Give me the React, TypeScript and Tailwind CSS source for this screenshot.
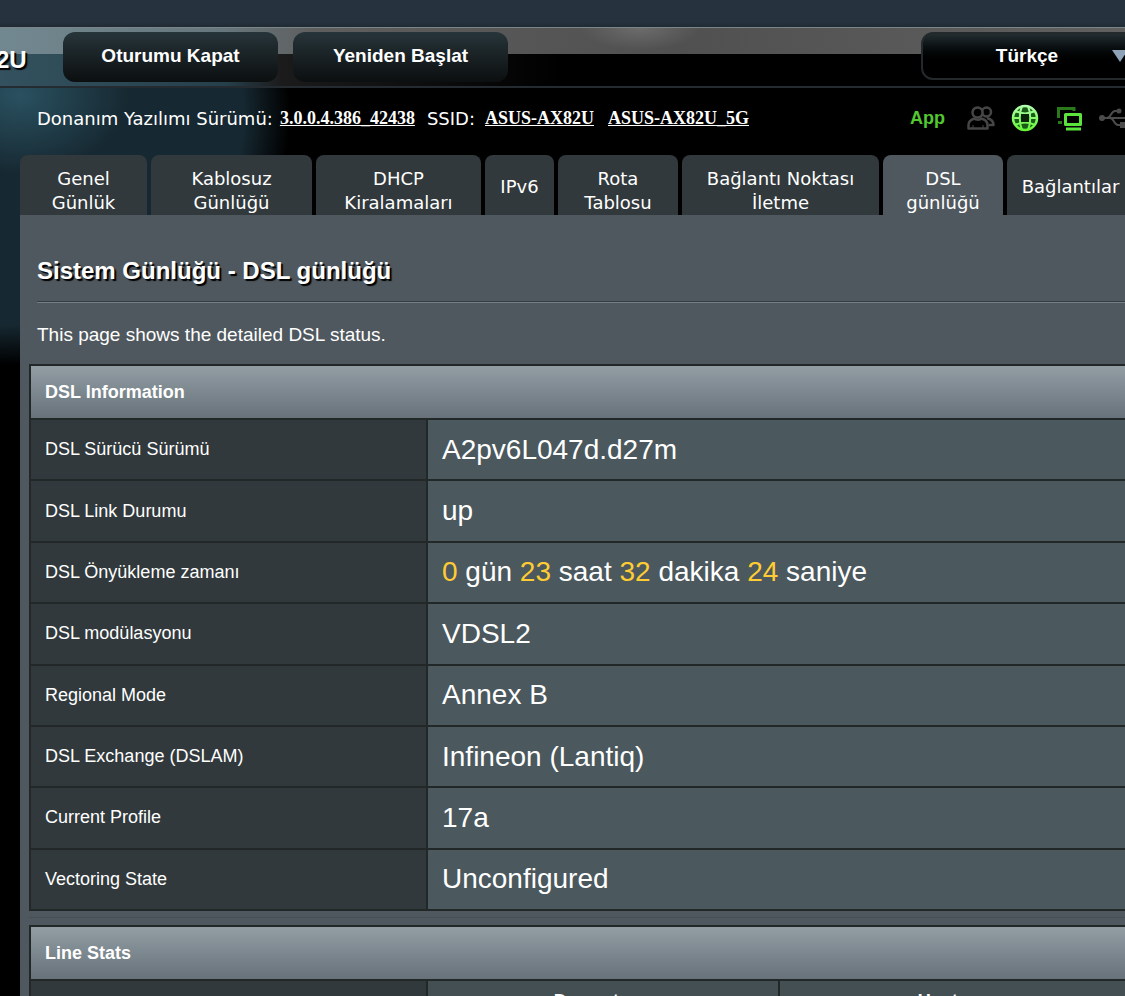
import type { ReactNode } from "react";

const tabs = [
  { lines: ["Genel", "Günlük"], width: "w-[127px]" },
  { lines: ["Kablosuz", "Günlüğü"], width: "w-[161px]" },
  { lines: ["DHCP", "Kiralamaları"], width: "w-[165px]" },
  { lines: ["IPv6"], width: "w-[69px]" },
  { lines: ["Rota", "Tablosu"], width: "w-[120px]" },
  { lines: ["Bağlantı Noktası", "İletme"], width: "w-[197px]" },
  { lines: ["DSL", "günlüğü"], width: "w-[120px]", active: true },
  { lines: ["Bağlantılar"], width: "w-[127px]" },
];

const dslInfo: { label: string; value: ReactNode }[] = [
  { label: "DSL Sürücü Sürümü", value: "A2pv6L047d.d27m" },
  { label: "DSL Link Durumu", value: "up" },
  {
    label: "DSL Önyükleme zamanı",
    value: (
      <>
        <Num>0</Num> gün <Num>23</Num> saat <Num>32</Num> dakika <Num>24</Num> saniye
      </>
    ),
  },
  { label: "DSL modülasyonu", value: "VDSL2" },
  { label: "Regional Mode", value: "Annex B" },
  { label: "DSL Exchange (DSLAM)", value: "Infineon (Lantiq)" },
  { label: "Current Profile", value: "17a" },
  { label: "Vectoring State", value: "Unconfigured" },
];

function Num({ children }: { children: ReactNode }) {
  return <span className="text-[#fc3]">{children}</span>;
}

function TopButton({ children }: { children: ReactNode }) {
  return (
    <button className="h-[50px] w-[215px] shrink-0 rounded-xl bg-gradient-to-b from-[#27353a] to-[#0c0f10] pb-0.5 text-[19px] font-bold text-white">
      {children}
    </button>
  );
}

function TableTitle({ children, span }: { children: ReactNode; span: number }) {
  return (
    <thead>
      <tr>
        <th
          colSpan={span}
          className="h-[54px] border-2 border-[#222728] bg-gradient-to-b from-[#929ea4] to-[#67727a] pl-3.5 text-left text-[18px] font-bold"
        >
          {children}
        </th>
      </tr>
    </thead>
  );
}

function ClientsIcon() {
  return (
    <svg width="28" height="24" viewBox="0 0 28 24" fill="none" stroke="#464646" strokeWidth="2.500" strokeLinejoin="round">
      <circle cx="19.500" cy="6" r="4.500" />
      <path d="M20 12c4 1 6.500 3 6.500 7h-5" />
      <circle cx="10.500" cy="6.500" r="5" fill="#000" />
      <path d="M7.500 12.500C4 13.500 1.500 16 1.500 19v3.500h19V19c0-3-2.500-5.500-6-6.500-1 1.500-6 1.500-7 0z" fill="#000" />
      <path d="M6 22v-3M16 22v-3" strokeWidth="1" />
    </svg>
  );
}

function GlobeIcon() {
  return (
    <svg width="28" height="28" viewBox="0 0 28 28" fill="none" strokeWidth="2">
      <defs>
        <linearGradient id="globe" x1="0" y1="0" x2="0" y2="28" gradientUnits="userSpaceOnUse">
          <stop offset="0" stopColor="#b4ffb4" />
          <stop offset="1" stopColor="#62f52e" />
        </linearGradient>
      </defs>
      <g stroke="url(#globe)">
        <circle cx="14" cy="14" r="12" fill="#1a5a17" strokeWidth="2.500" />
        <path d="M11 2C8 9 8 19 11 26M17 2c3 7 3 17 0 24" />
        <path d="M4 7c6 3 14 3 20 0M4 21c6-3 14-3 20 0" />
        <path d="M2 14h7M19 14h7" />
      </g>
      <path d="M10 10h8v8h-8z" fill="#0b2409" />
    </svg>
  );
}

function ScreensIcon() {
  return (
    <svg width="28" height="28" viewBox="0 0 28 28" fill="none" strokeWidth="3">
      <path d="M3.500 14V4.500H19V7" stroke="#2a7a1c" />
      <path d="M3 17h4v3H3z" fill="#2a7a1c" />
      <path d="M10.500 10.500h15v10h-15z" stroke="#5ae43c" strokeLinejoin="round" />
      <path d="M11 25h15" stroke="#5ae43c" />
    </svg>
  );
}

function UsbIcon() {
  return (
    <svg width="42" height="24" viewBox="0 0 42 24" fill="none" stroke="#4c4c4c" strokeWidth="2">
      <circle cx="3" cy="12" r="2" fill="#4c4c4c" />
      <path d="M3 12h33M8 12c4 0 4-7 8-7h3M11 12c4 0 4 7 8 7h3" />
      <circle cx="20" cy="5" r="1.500" fill="#4c4c4c" />
      <path d="M22 17h4v4h-4zM35 8l6 4-6 4z" fill="#4c4c4c" />
    </svg>
  );
}

export default function App() {
  return (
    <div className="min-h-screen overflow-x-hidden bg-black bg-[radial-gradient(ellipse_110px_80px_at_20px_95px,#2a5160,transparent),radial-gradient(ellipse_290px_250px_at_0px_115px,#162831_84%,transparent)] font-['Liberation_Sans',Arial,sans-serif] text-white">
      <div className="h-[27px] bg-gradient-to-b from-[#26333f] from-80% to-[#202a33]" />

      <header className="bg-[linear-gradient(to_right,#33515e,#26404b_20%,#1c1b1c_25%,transparent_50%)]">
        <div className="flex h-[61px] items-start border-t border-b-2 border-t-[#7b868a] border-b-[#252c31] bg-[radial-gradient(ellipse_60px_22px_at_640px_0px,#6c6c6c,transparent),linear-gradient(to_right,#728890,#66767c_20%,#5e5e5e_28%,#505050_60%,#606060)] bg-[length:100%_26px] bg-no-repeat pt-1">
          <span className="-ml-1 mt-3 w-[67px] shrink-0 text-2xl leading-8 font-bold [text-shadow:2px_2px_1px_#000]">2U</span>
          <div className="flex gap-[15px]">
            <TopButton>Oturumu Kapat</TopButton>
            <TopButton>Yeniden Başlat</TopButton>
          </div>
          <button className="-mr-4 ml-auto flex h-[48px] w-[220px] shrink-0 items-center rounded-xl border-2 border-[#24292b] bg-gradient-to-b from-[#263236] to-black to-70% bg-origin-border pr-2.5 pl-5 text-[19px] font-bold">
            <span className="flex-1">Türkçe</span>
            <svg width="18" height="12" viewBox="0 0 18 12" fill="#8fa3b8">
              <path d="M1 0h16L9 12z" />
            </svg>
          </button>
        </div>
      </header>

      <div className="flex h-[66px] items-center pb-1.5 pl-[37px] font-['DejaVu_Sans',Verdana,sans-serif] text-[18px] whitespace-nowrap">
        <span>Donanım Yazılımı Sürümü:</span>
        <a href="#" className="ml-[7px] font-['Liberation_Serif',serif] font-bold underline">3.0.0.4.386_42438</a>
        <span className="ml-3">SSID:</span>
        <a href="#" className="ml-2.5 font-['Liberation_Serif',serif] font-bold underline">ASUS-AX82U</a>
        <a href="#" className="ml-3.5 font-['Liberation_Serif',serif] font-bold underline">ASUS-AX82U_5G</a>
        <div className="-mr-4 ml-auto flex items-center">
          <a href="#" className="mr-[22px] font-['Liberation_Sans',sans-serif] font-bold text-[#53c72f]">App</a>
          <div className="flex items-center gap-4">
            <ClientsIcon />
            <GlobeIcon />
            <ScreensIcon />
            <UsbIcon />
          </div>
        </div>
      </div>

      <nav className="flex h-[61px] gap-1 pt-px pl-5 font-['DejaVu_Sans',Verdana,sans-serif] text-[18px] leading-6">
        {tabs.map((tab) => (
          <a
            key={tab.lines[0]}
            href="#"
            className={`flex shrink-0 flex-col items-center rounded-t-lg whitespace-nowrap ${tab.width} ${
              tab.active ? "bg-[#4f585e]" : "bg-[#31393c]"
            } ${tab.lines.length > 1 ? "pt-3" : "pt-5"}`}
          >
            {tab.lines.map((line) => (
              <span key={line}>{line}</span>
            ))}
          </a>
        ))}
      </nav>

      <main className="ml-5 bg-[#4f585e] pt-10 pl-[9px]">
        <h1 className="pl-2 text-2xl leading-8 font-bold [text-shadow:2px_2px_1px_#000]">Sistem Günlüğü - DSL günlüğü</h1>
        <hr className="mt-3.5 ml-2 h-0.5 border-t border-b border-t-[#363d40] border-b-[#748088]" />
        <p className="mt-5 pl-2 text-[19px] leading-6">This page shows the detailed DSL status.</p>

        <table className="mt-[17px] h-[547px] w-[calc(100%+6px)] table-fixed border-collapse">
          <colgroup>
            <col className="w-[397px]" />
            <col />
          </colgroup>
          <TableTitle span={2}>DSL Information</TableTitle>
          <tbody>
            {dslInfo.map((row) => (
              <tr key={row.label}>
                <th scope="row" className="border-2 border-[#222728] bg-[#31393c] pl-3.5 text-left text-[18px] font-normal">
                  {row.label}
                </th>
                <td className="border-2 border-[#222728] bg-[#4b585d] pl-3.5 text-[28px] leading-8">{row.value}</td>
              </tr>
            ))}
          </tbody>
        </table>

        <hr className="mt-1.5 border-[#464f54]" />

        <table className="mt-[7px] w-[calc(100%+6px)] table-fixed border-collapse">
          <colgroup>
            <col className="w-[397px]" />
            <col />
            <col />
          </colgroup>
          <TableTitle span={3}>Line Stats</TableTitle>
          <tbody>
            <tr className="h-[42px] text-[18px]">
              <td className="border-2 border-[#222728] bg-[#31393c]" />
              <th scope="col" className="border-2 border-[#222728] bg-[#444f54] pl-2.5">Downstream</th>
              <th scope="col" className="border-2 border-[#222728] bg-[#444f54] pl-2.5">Upstream</th>
            </tr>
          </tbody>
        </table>
      </main>
    </div>
  );
}
